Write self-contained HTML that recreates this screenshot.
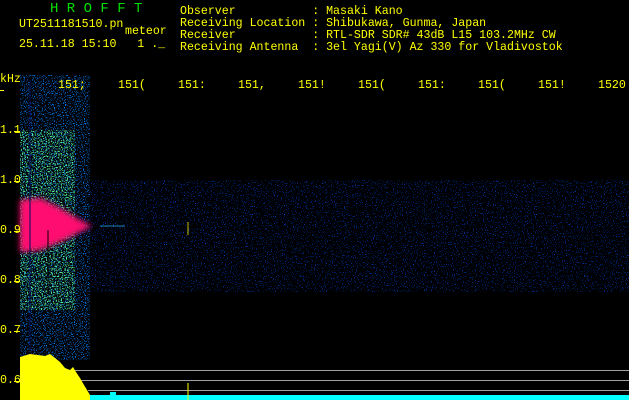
<!DOCTYPE html>
<html><head><meta charset="utf-8"><style>
html,body{margin:0;padding:0;background:#000;}
body{width:629px;height:400px;overflow:hidden;position:relative;font-family:"Liberation Mono","DejaVu Sans Mono",monospace;}
.t{position:absolute;color:#ffff00;font-size:11.6px;line-height:12px;white-space:pre;}
.g{color:#00e000;}
</style></head><body>
<svg width="629" height="400" style="position:absolute;left:0;top:0">
<defs>
<filter id="nz" x="0" y="0" width="100%" height="100%">
<feTurbulence type="fractalNoise" baseFrequency="0.9" numOctaves="1" seed="3" result="n"/>
<feColorMatrix in="n" type="matrix" values="0 0 0 0 0  0 0 0 0 0.05  0 0 0 0 0.6  0 0 0 12 -7.4"/>
<feComposite in2="SourceGraphic" operator="in"/>
</filter>
<filter id="nzL" x="0" y="0" width="100%" height="100%">
<feTurbulence type="fractalNoise" baseFrequency="0.9" numOctaves="1" seed="5" result="n"/>
<feColorMatrix in="n" type="matrix" values="0 0 0 0 0  0 0 0 0 0.2  0 0 0 0 0.9  0 0 0 10 -5.6"/>
<feComposite in2="SourceGraphic" operator="in"/>
</filter>
<filter id="nz2" x="0" y="0" width="100%" height="100%">
<feTurbulence type="fractalNoise" baseFrequency="0.8" numOctaves="1" seed="7" result="n"/>
<feColorMatrix in="n" type="matrix" values="0 0 0 0 0.1  0 0 0 0 0.9  0 0 0 0 0.3  0 0 0 10 -5.5"/>
<feComposite in2="SourceGraphic" operator="in"/>
</filter>
<filter id="bl"><feGaussianBlur stdDeviation="3"/></filter>
</defs>
<rect x="90" y="180" width="539" height="112" fill="#fff" filter="url(#nz)"/>
<rect x="20" y="75" width="70" height="285" fill="#fff" filter="url(#nzL)"/>
<rect x="20" y="130" width="55" height="180" fill="#fff" filter="url(#nz2)"/>
<polygon points="20,200 40,198 60,208 80,220 92,226 80,232 60,242 40,250 20,252" fill="#ff1070" filter="url(#bl)"/>
<line x1="48" y1="230" x2="48" y2="290" stroke="#000"/>
<line x1="30" y1="80" x2="30" y2="350" stroke="#001060"/>
<line x1="188" y1="222" x2="188" y2="235" stroke="#c0c000"/>
<line x1="100" y1="226" x2="125" y2="226" stroke="#2080c0"/>
<line x1="73" y1="370.5" x2="629" y2="370.5" stroke="#a0a0a0"/>
<line x1="80" y1="380.5" x2="629" y2="380.5" stroke="#a0a0a0"/>
<line x1="88" y1="390.5" x2="629" y2="390.5" stroke="#a0a0a0"/>
<polygon points="20,357 30,354 45,356 50,354 55,358 60,362 65,368 70,370 73,367 76,372 80,378 84,385 87,390 90,395 90,400 20,400" fill="#ffff00"/>
<rect x="90" y="395" width="539" height="5" fill="#00ffff"/>
<rect x="110" y="392" width="6" height="3" fill="#00ffff"/>
<line x1="188" y1="383" x2="188" y2="400" stroke="#ffff00"/>
<g stroke="#ffff00">
<line x1="0" y1="90.5" x2="4" y2="90.5"/>
<line x1="14" y1="131.5" x2="20" y2="131.5"/><line x1="14" y1="181.5" x2="20" y2="181.5"/>
<line x1="14" y1="231.5" x2="20" y2="231.5"/><line x1="14" y1="281.5" x2="20" y2="281.5"/>
<line x1="14" y1="331.5" x2="20" y2="331.5"/><line x1="14" y1="381.5" x2="20" y2="381.5"/>
</g>
</svg>
<div class="t g" style="left:50px;top:3px;font-size:14px;">H R O F F T</div>
<div class="t" style="left:19px;top:19px;">UT2511181510.pn</div>
<div class="t" style="left:125px;top:26px;">meteor</div>
<div class="t" style="left:19px;top:39px;">25.11.18 15:10   1 ._</div>
<div class="t" style="left:180px;top:6px;">Observer           : Masaki Kano
Receiving Location : Shibukawa, Gunma, Japan
Receiver           : RTL-SDR SDR# 43dB L15 103.2MHz CW
Receiving Antenna  : 3el Yagi(V) Az 330 for Vladivostok</div>
<div class="t" style="left:0px;top:74px;">kHz</div>
<div class="t" style="left:0px;top:125px;">1.1</div>
<div class="t" style="left:0px;top:175px;">1.0</div>
<div class="t" style="left:0px;top:225px;">0.9</div>
<div class="t" style="left:0px;top:275px;">0.8</div>
<div class="t" style="left:0px;top:325px;">0.7</div>
<div class="t" style="left:0px;top:375px;">0.6</div>
<div class="t" style="left:58px;top:80px;">151;</div>
<div class="t" style="left:118px;top:80px;">151(</div>
<div class="t" style="left:178px;top:80px;">151:</div>
<div class="t" style="left:238px;top:80px;">151,</div>
<div class="t" style="left:298px;top:80px;">151!</div>
<div class="t" style="left:358px;top:80px;">151(</div>
<div class="t" style="left:418px;top:80px;">151:</div>
<div class="t" style="left:478px;top:80px;">151(</div>
<div class="t" style="left:538px;top:80px;">151!</div>
<div class="t" style="left:598px;top:80px;">1520</div>
</body></html>
